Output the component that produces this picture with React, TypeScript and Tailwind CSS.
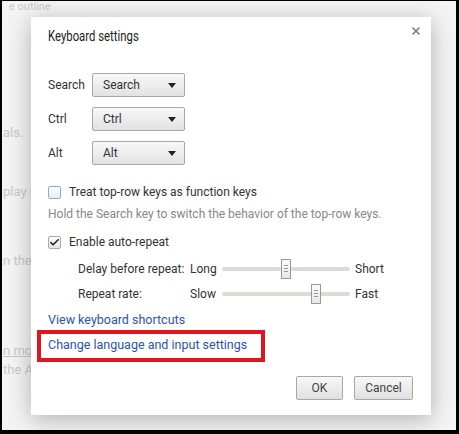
import { Check, X } from 'lucide-react';

const font = { fontFamily: 'Roboto, "Liberation Sans", sans-serif' };

function Select({ value }: { value: string }) {
  return (
    <div className="flex h-[24px] w-[93px] items-center justify-between rounded-[2px] border border-[#a8a8a8] bg-gradient-to-b from-[#f8f8f8] to-[#e2e2e2] pl-[10px] pr-[8px] text-[12px] text-[#333]">
      <span>{value}</span>
      <span className="h-0 w-0 border-x-[4px] border-t-[5px] border-x-transparent border-t-[#222]" />
    </div>
  );
}

function KeyRow({ label, value }: { label: string; value: string }) {
  return (
    <div className="flex items-center">
      <span className="w-[44px] text-[12px] text-[#333]">{label}</span>
      <Select value={value} />
    </div>
  );
}

function Thumb() {
  return (
    <div className="flex h-[20px] w-[10px] flex-col items-center justify-center gap-[2px] border border-[#999] bg-gradient-to-b from-[#fafafa] to-[#e6e6e6]">
      <span className="h-px w-[4px] bg-[#999]" />
      <span className="h-px w-[4px] bg-[#999]" />
      <span className="h-px w-[4px] bg-[#999]" />
    </div>
  );
}

function SliderRow({ label, min, max, pos }: { label: string; min: string; max: string; pos: number }) {
  return (
    <div className="flex h-[25px] items-center text-[12px] text-[#333]">
      <span className="w-[142px] whitespace-nowrap pl-[30px]">{label}</span>
      <span className="w-[32px]">{min}</span>
      <div className="relative flex h-[20px] w-[128px] items-center">
        <div className="h-[4px] w-full rounded-full bg-[#dedbd6]" />
        {/* thumb sits over the track */}
        <div className="absolute top-0" style={{ left: pos }}>
          <Thumb />
        </div>
      </div>
      <span className="ml-[5px]">{max}</span>
    </div>
  );
}

export default function App() {
  return (
    <div className="h-[434px] w-[459px] bg-black pb-[4px] pl-[2px] pr-[3px] pt-[1px]" style={font}>
      <div className="relative h-full w-full overflow-hidden bg-[#f4f4f4] text-[13px] text-[#c9c9c9]">
        {/* faded page behind the overlay */}
        <div className="flex flex-col pl-[1px]">
          <span className="pl-[6px] text-[11px] leading-[12px]">e outline</span>
          <span className="mt-[110px]">als.</span>
          <span className="mt-[39px]">play s</span>
          <span className="mt-[50px]">n the</span>
          <span className="mt-[70px] underline">n more</span>
          <span>the Ad</span>
        </div>

        <div className="absolute left-[29px] top-[16px] flex h-[398px] w-[400px] flex-col bg-white pl-[17px] pr-[18px] shadow-[0_4px_22px_rgba(0,0,0,0.28)]">
          <div className="flex items-start justify-between pt-[9px]">
            <h1 className="origin-left scale-x-[0.81] whitespace-nowrap text-[14px] text-[#222]">Keyboard settings</h1>
            <X size={12} strokeWidth={3} className="-mr-[9px] mt-[-1px] text-[#777]" />
          </div>

          <div className="mt-[26px] flex flex-col gap-[10px]">
            <KeyRow label="Search" value="Search" />
            <KeyRow label="Ctrl" value="Ctrl" />
            <KeyRow label="Alt" value="Alt" />
          </div>

          <label className="mt-[18px] flex items-center gap-[8px] text-[12px] text-[#333]">
            <span className="h-[13px] w-[13px] rounded-[2px] border border-[#8fa9d8] bg-gradient-to-b from-[#fdfdfd] to-[#e8ecf3]" />
            Treat top-row keys as function keys
          </label>
          <p className="mt-[4px] text-[12px] text-[#888]">Hold the Search key to switch the behavior of the top-row keys.</p>

          <label className="mt-[10px] flex items-center gap-[8px] text-[12px] text-[#333]">
            <span className="flex h-[13px] w-[13px] items-center justify-center rounded-[2px] border border-[#aaa] bg-gradient-to-b from-[#fdfdfd] to-[#e6e6e6]">
              <Check size={11} strokeWidth={3.5} className="text-[#222]" />
            </span>
            Enable auto-repeat
          </label>

          <div className="mt-[5px] flex flex-col">
            <SliderRow label="Delay before repeat:" min="Long" max="Short" pos={59} />
            <SliderRow label="Repeat rate:" min="Slow" max="Fast" pos={89} />
          </div>

          <a className="mt-[5px] w-fit text-[12.5px] text-[#2a52b8]">View keyboard shortcuts</a>
          <div className="-ml-[11px] flex h-[32px] w-[228px] items-center border-4 border-[#e3141e] pl-[7px]">
            <a className="whitespace-nowrap text-[12.5px] text-[#2a52b8]">Change language and input settings</a>
          </div>

          <div className="mt-auto flex justify-end gap-[11px] pb-[15px]">
            <button className="h-[24px] w-[47px] rounded-[2px] border border-[#a8a8a8] bg-gradient-to-b from-[#f8f8f8] to-[#e0e0e0] text-[12px] text-[#444]">OK</button>
            <button className="h-[24px] w-[59px] rounded-[2px] border border-[#a8a8a8] bg-gradient-to-b from-[#f8f8f8] to-[#e0e0e0] text-[12px] text-[#444]">Cancel</button>
          </div>
        </div>
      </div>
    </div>
  );
}
